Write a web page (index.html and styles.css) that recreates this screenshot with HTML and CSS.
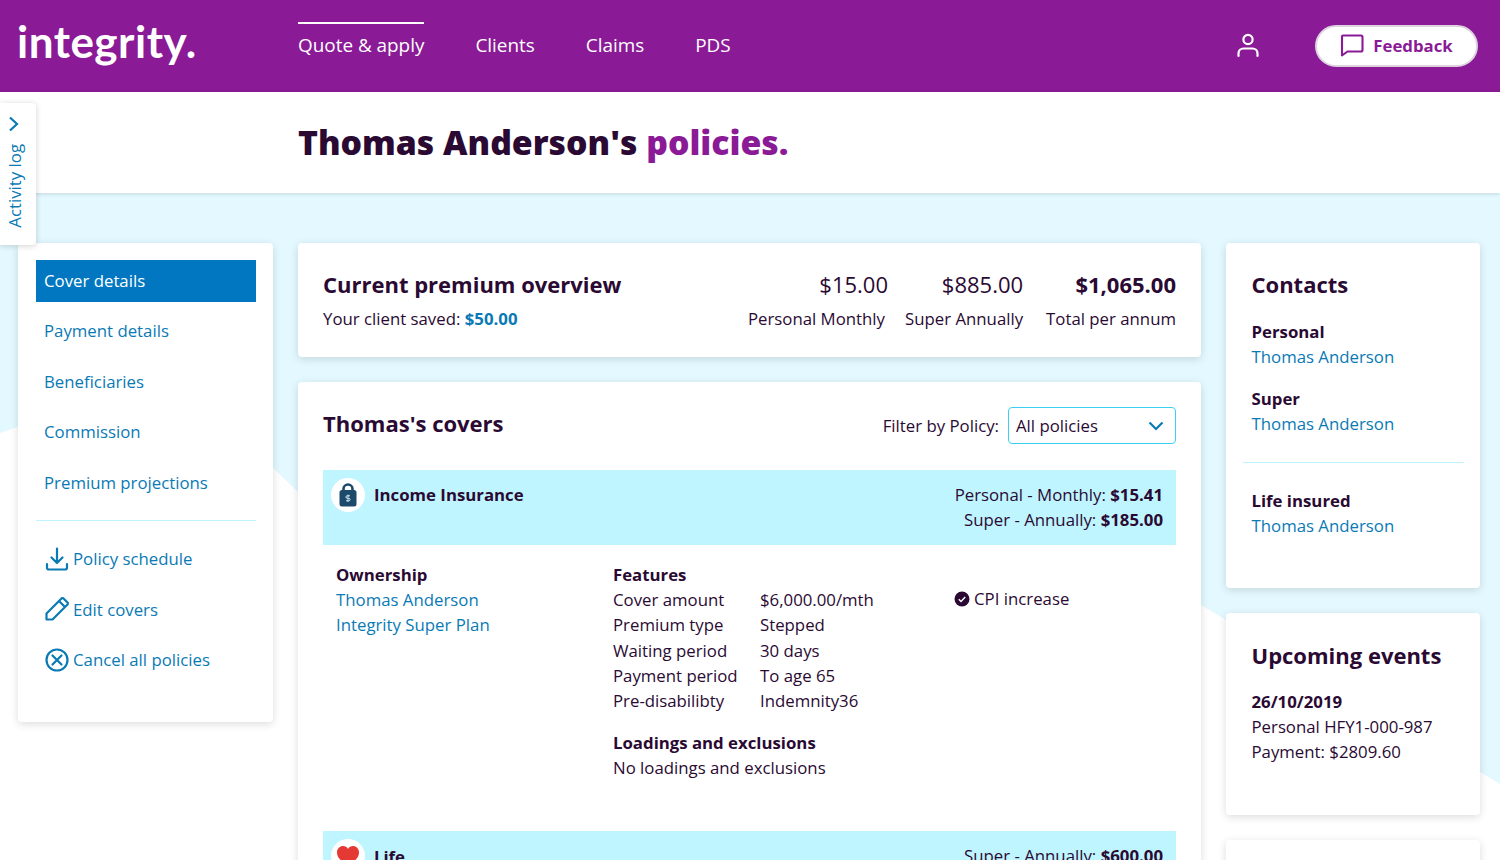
FILE: index.html
```html
<!DOCTYPE html>
<html lang="en">
<head>
<meta charset="utf-8">
<title>Thomas Anderson's policies</title>
<link rel="stylesheet" href="styles.css">
</head>
<body>
<header class="topbar">
  <div class="logo">integrity.</div>
  <nav class="topnav">
    <a class="topnav-item active">Quote &amp; apply</a>
    <a class="topnav-item">Clients</a>
    <a class="topnav-item">Claims</a>
    <a class="topnav-item">PDS</a>
  </nav>
  <svg class="user-icon" width="24" height="26" viewBox="0 0 24 26" fill="none" stroke="#fff" stroke-width="2.2" stroke-linecap="round"><circle cx="12" cy="7.5" r="4.6"/><path d="M2.5 24v-2.5c0-3.2 2.3-5 5-5h9c2.700 0 5 1.800 5 5V24"/></svg>
  <button class="feedback">
    <svg width="24" height="24" viewBox="0 0 24 24" fill="none" stroke="#8a1a96" stroke-width="2.100" stroke-linejoin="round"><path d="M3 2.500h18a1.500 1.500 0 0 1 1.500 1.500v13a1.500 1.500 0 0 1-1.500 1.500H7.500L2 22.500V3.500a1 1 0 0 1 1-1z"/></svg>
    <span>Feedback</span>
  </button>
</header>
<div class="titlebar"><h1>Thomas Anderson's <span class="accent">policies.</span></h1></div>
<aside class="activity">
  <svg width="12" height="16" viewBox="0 0 12 16" fill="none" stroke="#0a7ab5" stroke-width="2.200"><path d="M2 1.500 9 8l-7 6.500"/></svg>
  <span class="activity-label">Activity log</span>
</aside>
<main class="main">
  <section class="card side">
    <a class="side-item selected">Cover details</a>
    <a class="side-item">Payment details</a>
    <a class="side-item">Beneficiaries</a>
    <a class="side-item">Commission</a>
    <a class="side-item">Premium projections</a>
    <hr class="rule side-rule">
    <a class="side-action">
      <svg width="24" height="24" viewBox="0 0 24 24" fill="none" stroke="#0a7ab5" stroke-width="2.200" stroke-linecap="round" stroke-linejoin="round"><path d="M12 1.500V16M6.500 10.500 12 16l5.500-5.500M2 17v3.500a2 2 0 0 0 2 2h16a2 2 0 0 0 2-2V17"/></svg>
      <span>Policy schedule</span>
    </a>
    <a class="side-action">
      <svg width="24" height="24" viewBox="0 0 24 24" fill="none" stroke="#0a7ab5" stroke-width="2.200" stroke-linejoin="round"><path d="M1.500 22.500v-6L16.500 1.500a1.500 1.500 0 0 1 2 0l4 4a1.500 1.500 0 0 1 0 2L7.500 22.500zM14 4l6 6"/></svg>
      <span>Edit covers</span>
    </a>
    <a class="side-action">
      <svg width="24" height="24" viewBox="0 0 24 24" fill="none" stroke="#0a7ab5" stroke-width="2.200" stroke-linecap="round"><circle cx="12" cy="12" r="10.500"/><path d="m7.500 7.500 9 9M16.500 7.500l-9 9"/></svg>
      <span>Cancel all policies</span>
    </a>
  </section>

  <div class="center">
    <section class="card overview">
      <div class="overview-left">
        <h2>Current premium overview</h2>
        <p>Your client saved: <strong class="link">$50.00</strong></p>
      </div>
      <div class="figures">
        <div class="figure"><span class="amount">$15.00</span><span class="figure-label">Personal Monthly</span></div>
        <div class="figure"><span class="amount">$885.00</span><span class="figure-label">Super Annually</span></div>
        <div class="figure"><span class="amount total">$1,065.00</span><span class="figure-label">Total per annum</span></div>
      </div>
    </section>

    <section class="card covers">
      <div class="covers-head">
        <h2>Thomas's covers</h2>
        <div class="filter">
          <span>Filter by Policy:</span>
          <div class="select">
            <span>All policies</span>
            <svg width="16" height="10" viewBox="0 0 16 10" fill="none" stroke="#0a7ab5" stroke-width="2.200"><path d="m1.500 1.500 6.500 6.500 6.500-6.500"/></svg>
          </div>
        </div>
      </div>

      <div class="band">
        <div class="band-name">
          <span class="band-icon">
            <svg width="18" height="24" viewBox="0 0 18 24"><path fill="none" stroke="#1d4a6b" stroke-width="2.600" d="M4.500 9V6a4.500 4.500 0 0 1 9 0v3"/><rect fill="#1d4a6b" x="0.500" y="7" width="17" height="16.500" rx="2.500"/><path d="M11 12.800H8.200a1.200 1.200 0 0 0 0 2.500h1.600a1.200 1.200 0 0 1 0 2.500H7M9 11.600v7.400" fill="none" stroke="#cfe9f5" stroke-width="1"/></svg>
          </span>
          <strong>Income Insurance</strong>
        </div>
        <div class="band-prices">
          <div>Personal - Monthly: <strong>$15.41</strong></div>
          <div>Super - Annually: <strong>$185.00</strong></div>
        </div>
      </div>

      <div class="cover-body">
        <div class="col-owner">
          <strong>Ownership</strong>
          <a class="link">Thomas Anderson</a>
          <a class="link">Integrity Super Plan</a>
        </div>
        <div class="col-features">
          <strong>Features</strong>
          <dl class="feature-grid">
            <dt>Cover amount</dt><dd>$6,000.00/mth</dd>
            <dt>Premium type</dt><dd>Stepped</dd>
            <dt>Waiting period</dt><dd>30 days</dd>
            <dt>Payment period</dt><dd>To age 65</dd>
            <dt>Pre-disabilibty</dt><dd>Indemnity36</dd>
          </dl>
          <strong class="loadings">Loadings and exclusions</strong>
          <span>No loadings and exclusions</span>
        </div>
        <div class="col-extra">
          <svg width="16" height="16" viewBox="0 0 16 16"><circle cx="8" cy="8" r="7.500" fill="#2a0a33"/><path d="m4.800 8.200 2.200 2.200 4.200-4.400" fill="none" stroke="#fff" stroke-width="1.400"/></svg>
          <span>CPI increase</span>
        </div>
      </div>

      <div class="band">
        <div class="band-name">
          <span class="band-icon">
            <svg width="24" height="22" viewBox="0 0 24 22"><path fill="#e53935" d="M12 21C5 16 1 12.500 1 7.500 1 3.500 4 1 7 1c2.200 0 3.800.8 5 3 1.200-2.200 2.800-3 5-3 3 0 6 2.500 6 6.500C23 12.500 19 16 12 21z"/></svg>
          </span>
          <strong>Life</strong>
        </div>
        <div class="band-prices">
          <div>Super - Annually: <strong>$600.00</strong></div>
        </div>
      </div>
    </section>
  </div>

  <div class="right">
    <section class="card contacts">
      <h2>Contacts</h2>
      <div class="contact"><strong>Personal</strong><a class="link">Thomas Anderson</a></div>
      <div class="contact"><strong>Super</strong><a class="link">Thomas Anderson</a></div>
      <hr class="rule contact-rule">
      <div class="contact"><strong>Life insured</strong><a class="link">Thomas Anderson</a></div>
    </section>
    <section class="card events">
      <h2>Upcoming events</h2>
      <div class="contact">
        <strong>26/10/2019</strong>
        <span>Personal HFY1-000-987</span>
        <span>Payment: $2809.60</span>
      </div>
    </section>
    <section class="card stub"></section>
  </div>
</main>
</body>
</html>
```
FILE: styles.css
```css
* { box-sizing: border-box; }
html, body { margin: 0; height: 860px; overflow: hidden; }
body {
  position: relative;
  background: #fff;
  color: #2a0a33;
  font: 400 16.8px/25.2px "Open Sans", "Noto Sans", sans-serif;
}
h1, h2, p, dl, dd { margin: 0; }
strong { font-weight: 700; }
.link { color: #0a7ab5; }
a.link { display: block; }
.accent { color: #8a1a96; }

.topbar {
  height: 92px;
  background: #8a1a96;
  color: #fff;
  display: flex;
  align-items: flex-start;
  padding-left: 17px;
}
.logo {
  width: 281px;
  font: 700 44px/83px "Lato", sans-serif;
  letter-spacing: 0.5px;
}
.topnav { display: flex; gap: 51px; margin-top: 22px; }
.topnav-item {
  display: block;
  border-top: 2px solid transparent;
  font-size: 18.9px;
  line-height: 42px;
}
.topnav-item.active { border-top-color: #fff; }
.user-icon { margin: 32px 0 0 auto; }
.feedback {
  margin: 25px 22px 0 55px;
  width: 163px;
  height: 42px;
  border: 2px solid #dcd3df;
  border-radius: 21px;
  background: #fff;
  color: #8a1a96;
  display: flex;
  align-items: center;
  justify-content: center;
  gap: 9px;
  font: 700 16.8px "Open Sans", sans-serif;
  padding: 0 0 2px;
}

.titlebar {
  position: relative;
  z-index: 1;
  height: 101px;
  padding: 25px 0 0 298px;
  background: #fff;
  box-shadow: 0 1px 4px rgba(0, 0, 0, .14);
}
h1 {
  font-size: 33.75px;
  line-height: 50px;
  font-weight: 800;
}

.activity {
  position: absolute;
  z-index: 3;
  left: 0;
  top: 103px;
  width: 36px;
  height: 142px;
  background: #fff;
  border-radius: 0 4px 4px 0;
  box-shadow: 0 1px 6px rgba(0, 0, 0, .18);
  display: flex;
  flex-direction: column;
  align-items: center;
  padding-top: 13px;
  color: #0a7ab5;
}
.activity svg { margin-left: -8px; }
.activity-label {
  writing-mode: vertical-rl;
  transform: rotate(180deg);
  margin: 12px 0 0 -6px;
  font-size: 16.8px;
  line-height: 20px;
}

.main {
  position: relative;
  display: grid;
  grid-template-columns: 255px 903px 254px;
  gap: 25px;
  align-items: start;
  padding: 50px 20px 0 18px;
}
.main::before {
  content: "";
  position: absolute;
  left: 0;
  top: 0;
  width: 1500px;
  height: 667px;
  background: #e3f9ff;
  clip-path: polygon(0 0, 1500px 0, 1500px 591px, 1226px 427px, 1201px 412px, 298px 299px, 273px 275px, 150px 175px, 18px 234px, 0 240px);
}
.card {
  position: relative;
  background: #fff;
  border-radius: 4px;
  box-shadow: 0 2px 8px rgba(0, 0, 0, .14);
}
h2 {
  font-size: 22px;
  line-height: 32px;
  font-weight: 700;
}
.rule { border: 0; border-top: 1px solid #bff4ff; margin: 0; }

.side { height: 479px; padding: 17.1px 17px 17px 18px; }
.side-item {
  display: block;
  height: 42px;
  margin-bottom: 8.4px;
  padding-left: 8px;
  line-height: 42px;
  color: #0a7ab5;
}
.side-item.selected { background: #0077c0; color: #fff; }
.side-rule { margin: 16px 0 13px; }
.side-action {
  display: flex;
  align-items: center;
  gap: 4px;
  height: 50.4px;
  padding-left: 9px;
  color: #0a7ab5;
}

.center { display: flex; flex-direction: column; gap: 25px; }
.overview {
  height: 114px;
  padding: 25px 25px 0;
  display: flex;
  justify-content: space-between;
}
.overview-left p { margin-top: 6px; }
.figures { display: flex; gap: 23px; }
.figure { display: flex; flex-direction: column; align-items: flex-end; }
.figure:first-child { margin-right: -6px; }
.figure:first-child .figure-label { margin-right: 3px; }
.amount { font-size: 22px; line-height: 32px; margin-bottom: 6px; }
.amount.total { font-weight: 700; }

.covers { padding: 25px 25px 0; }
.covers-head {
  height: 37px;
  display: flex;
  justify-content: space-between;
  align-items: center;
  margin-bottom: 26px;
}
.covers-head h2 { margin-bottom: 5px; }
.filter { display: flex; align-items: center; gap: 9px; }
.select {
  width: 168px;
  height: 37px;
  border: 1px solid #3cd0f5;
  border-radius: 4px;
  display: flex;
  align-items: center;
  justify-content: space-between;
  padding: 0 11px 0 7px;
}
.band {
  min-height: 75px;
  background: #bff5ff;
  padding: 8px 13px 0 8px;
  display: flex;
  justify-content: space-between;
  align-items: flex-start;
}
.band-name { display: flex; align-items: center; gap: 9px; }
.band-icon {
  width: 34px;
  height: 34px;
  border-radius: 50%;
  background: #fff;
  display: flex;
  align-items: center;
  justify-content: center;
}
.band-prices { text-align: right; padding-top: 4px; }
.cover-body {
  display: flex;
  padding: 17px 13px 51px;
}
.col-owner { width: 277px; display: flex; flex-direction: column; }
.col-features { width: 341px; display: flex; flex-direction: column; }
.feature-grid {
  display: grid;
  grid-template-columns: 147px 1fr;
}
.feature-grid dt, .feature-grid dd { font-weight: 400; }
.loadings { margin-top: 16.8px; }
.col-extra {
  display: flex;
  align-items: center;
  gap: 4px;
  height: 25.2px;
  margin-top: 24px;
}

.right { display: flex; flex-direction: column; gap: 25px; }
.contacts { height: 345px; padding: 25px 16px 0 25.5px; }
.contacts h2 { margin-bottom: 19px; }
.contact { display: flex; flex-direction: column; margin-bottom: 16.8px; }
.contact-rule { margin: 25.4px 0 25px -8.5px; }
.events { height: 202px; padding: 26px 17px 0 25.5px; }
.events h2 { margin-bottom: 18px; }
.stub { height: 100px; }
```
